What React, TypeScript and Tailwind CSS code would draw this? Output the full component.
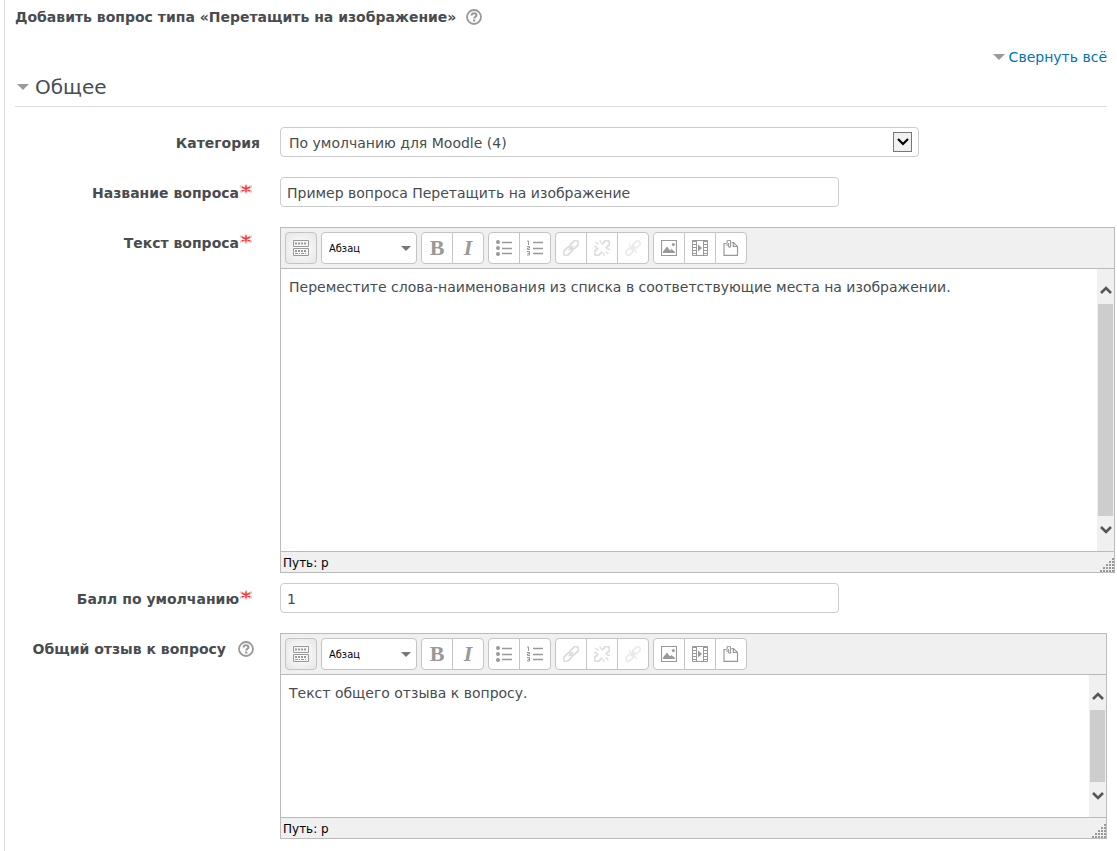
import { useId, useState } from 'react';
import type { ReactNode } from 'react';

function HelpButton({ label }: { label: string }) {
  return (
    <button type="button" aria-label={label} className="block size-4 shrink-0 cursor-pointer text-[#999999]">
      <svg viewBox="0 0 16 16" className="size-4" fill="none" stroke="currentColor">
        <circle cx="8" cy="8" r="7" strokeWidth="1.8" />
        <path d="M5.5 6.600C5.500 5 6.600 4.200 8 4.200s2.500.8 2.500 2.100c0 1.600-2.300 1.500-2.300 3.200" strokeWidth="2.100" />
        <path d="M7 11.500h2.300" strokeWidth="2" />
      </svg>
    </button>
  );
}

function Triangle() {
  return (
    <svg viewBox="0 0 12 6" className="h-1.5 w-3 shrink-0" fill="#999999">
      <path d="M0 0h12L6 6z" />
    </svg>
  );
}

function RequiredMark() {
  return (
    <svg viewBox="0 0 14 10" className="mb-2 h-2.5 w-3.5 shrink-0" fill="none" strokeLinecap="round">
      <path d="M7 1.500v7M2 2.500l10 5M12 2.500l-10 5" stroke="#ffb8b8" strokeWidth="2.400" />
      <path d="M7 2v5.500M3.500 3.300l7 3.400M10.500 3.300l-7 3.400" stroke="#ff3030" strokeWidth="1.300" />
    </svg>
  );
}

type RowProps = {
  label: string;
  htmlFor: string;
  required?: boolean;
  help?: boolean;
  children: ReactNode;
};

function Row({ label, htmlFor, required, help, children }: RowProps) {
  return (
    <div className="flex items-start gap-5">
      <div className="flex h-[30px] w-[245px] shrink-0 items-center justify-end pt-0.5">
        <label htmlFor={htmlFor} className="font-bold">
          {label}
        </label>
        {required && (
          <span className="mr-[7px]">
            <RequiredMark />
          </span>
        )}
        {help && (
          <span className="mr-1.5 ml-3">
            <HelpButton label={`Справка: ${label}`} />
          </span>
        )}
      </div>
      <div className="min-w-0 flex-1">{children}</div>
    </div>
  );
}

function Icon({ children, faded }: { children: ReactNode; faded?: boolean }) {
  return (
    <svg
      viewBox="0 0 16 16"
      className={faded ? 'size-4 text-[#dddddd]' : 'size-4 text-[#999999]'}
      fill="none"
      stroke="currentColor"
    >
      {children}
    </svg>
  );
}

const keyboardIcon = (
  <Icon>
    <path d="M.5.5h15v6H.5zM.5 8.500h15v7H.5z" />
    <path d="M2 3.500h12" strokeWidth="2" strokeDasharray="2 1" />
    <path d="M2 11h12" strokeWidth="2" strokeDasharray="2 1" />
    <path d="M2 13.500h12" strokeDasharray="3 1 1 1" />
  </Icon>
);

const bulletIcon = (
  <Icon>
    <g fill="currentColor" stroke="none">
      <circle cx="2" cy="2" r="2" />
      <circle cx="2" cy="8" r="2" />
      <circle cx="2" cy="14" r="2" />
    </g>
    <path d="M6 2.500h10M6 8.500h10M6 13.500h10" strokeWidth="1.400" />
  </Icon>
);

const numberIcon = (
  <Icon>
    <path d="M0 1h1.500v4M0 6.500h2.500v1.500H.500v1.500H3M0 11.500h2.500v3.500H0M.500 13.300h2" strokeWidth="1" />
    <path d="M6 2.500h10M6 8.500h10M6 13.500h10" strokeWidth="1.400" />
  </Icon>
);

const linkIcon = (
  <Icon faded>
    <g transform="rotate(-45 8 8)" strokeWidth="1.900">
      <rect x="-1.500" y="5.200" width="10" height="5.600" rx="2.800" />
      <rect x="7.500" y="5.200" width="10" height="5.600" rx="2.800" />
      <path d="M5 8h6" />
    </g>
  </Icon>
);

const unlinkIcon = (
  <Icon faded>
    <g transform="rotate(-45 8 8)" strokeWidth="1.900">
      <path d="M5.500 5.200H1.300a2.800 2.800 0 0 0 0 5.600h4.200M10.500 5.200h4.200a2.800 2.800 0 0 1 0 5.600h-4.200" />
    </g>
    <path d="M1.500 2l3 2.500M6 0l.7 3M0 6.500l3 .5M14.500 14l-3-2.500M10 16l-.7-3M16 9.500l-3-.5" strokeWidth="1.300" />
  </Icon>
);

const noLinkIcon = (
  <span className="opacity-60">
    <Icon faded>
      <g transform="rotate(-45 8 8)" strokeWidth="1.500">
        <rect x="-1" y="5.500" width="8" height="5" rx="2.500" />
        <rect x="9" y="5.500" width="8" height="5" rx="2.500" />
        <path d="M5 8h6" />
      </g>
      <path d="M4 4l8 9M8 3v10M3.500 8h9" strokeWidth="1.200" />
    </Icon>
  </span>
);

const imageIcon = (
  <Icon>
    <path d="M.5.500h15v15H.5z" strokeWidth="1.200" />
    <g fill="currentColor" stroke="none">
      <path d="M2 13V11.500L6 6.500l3 4 1.500-1.500L14 12v1z" />
      <circle cx="12.300" cy="4.500" r="1.500" />
    </g>
  </Icon>
);

const mediaIcon = (
  <Icon>
    <path d="M.5.500h15v15H.5zM4.500 0v16M11.500 0v16" />
    <path d="M2.500 1v14M13.500 1v14" strokeWidth="3" strokeDasharray="1 2" />
    <path d="M6 4.500l4 3.500-4 3.500z" fill="currentColor" stroke="none" />
  </Icon>
);

const pasteIcon = (
  <Icon>
    <path d="M3 3.500H1v11.800h13.500V6.500L10.500 2.500H8.500M10.300 2.800V6.500h4" strokeWidth="1.200" />
    <path d="M4 6V2a1.800 1.800 0 0 1 3.600 0V6.500a1.100 1.100 0 0 1-2 0V3" strokeWidth="1.100" />
  </Icon>
);

const boldIcon = <span className="font-['Liberation_Serif',serif] text-[22px] leading-none font-bold text-[#999999]">B</span>;
const italicIcon = <span className="font-['Liberation_Serif',serif] text-[22px] leading-none font-bold italic text-[#999999]">I</span>;

type Tool = { name: string; icon: ReactNode; disabled?: boolean };

const toolGroups: Tool[][] = [
  [
    { name: 'Полужирный', icon: boldIcon },
    { name: 'Курсив', icon: italicIcon },
  ],
  [
    { name: 'Маркированный список', icon: bulletIcon },
    { name: 'Нумерованный список', icon: numberIcon },
  ],
  [
    { name: 'Вставить ссылку', icon: linkIcon, disabled: true },
    { name: 'Удалить ссылку', icon: unlinkIcon, disabled: true },
    { name: 'Без автоссылки', icon: noLinkIcon, disabled: true },
  ],
  [
    { name: 'Изображение', icon: imageIcon },
    { name: 'Медиа', icon: mediaIcon },
    { name: 'Управление файлами', icon: pasteIcon },
  ],
];

function Toolbar() {
  return (
    <div className="flex gap-1 border-b border-[#bbbbbb] bg-[#f0f0f0] p-1">
      <button
        type="button"
        aria-label="Показать панели"
        className="flex size-8 items-center justify-center rounded border border-[#c4c4c4] bg-[radial-gradient(#ffffff,#e6e6e6)]"
      >
        {keyboardIcon}
      </button>
      <div className="relative">
        <select
          aria-label="Формат"
          className="block h-8 w-24 appearance-none rounded border border-[#c4c4c4] bg-white pt-px pr-5 pl-[7px] font-['DejaVu_Sans_Condensed','DejaVu_Sans',sans-serif] text-[11px] text-black"
        >
          <option>Абзац</option>
        </select>
        <svg viewBox="0 0 10 5" className="pointer-events-none absolute top-3.5 right-1.5 h-[5px] w-2.5" fill="#777777">
          <path d="M0 0h10L5 5z" />
        </svg>
      </div>
      {toolGroups.map((group) => (
        <div key={group[0].name} className="flex divide-x divide-[#c4c4c4] overflow-hidden rounded border border-[#c4c4c4] bg-white">
          {group.map((tool) => (
            <button
              key={tool.name}
              type="button"
              aria-label={tool.name}
              disabled={tool.disabled}
              className="box-content flex h-[30px] w-[30px] items-center justify-center"
            >
              {tool.icon}
            </button>
          ))}
        </div>
      ))}
    </div>
  );
}

function Chevron({ down }: { down?: boolean }) {
  return (
    <svg viewBox="0 0 12 8" className="h-2 w-3" fill="none" stroke="#555555" strokeWidth="2.600">
      <path d={down ? 'M1 1l5 5 5-5' : 'M1 7l5-5 5 5'} />
    </svg>
  );
}

function Scrollbar() {
  return (
    <div aria-hidden="true" className="flex w-[17px] shrink-0 flex-col items-center bg-[#f0f0f0]">
      <div className="flex h-[35px] items-center pt-1.5">
        <Chevron />
      </div>
      <div className="w-[15px] flex-1 bg-[#cdcdcd]" />
      <div className="flex h-[35px] items-center pb-2">
        <Chevron down />
      </div>
    </div>
  );
}

function ResizeGrip() {
  return (
    <svg viewBox="0 0 14 14" className="size-3.5" fill="#999999">
      {[0, 1, 2, 3, 4].flatMap((row) =>
        Array.from({ length: row + 1 }, (_, i) => (
          <rect key={`${row}-${i}`} x={12 - i * 3} y={row * 3} width="2" height="2" />
        )),
      )}
    </svg>
  );
}

function Editor({ id, initial, tall }: { id: string; initial: string; tall?: boolean }) {
  const [text, setText] = useState(initial);
  return (
    <div className={tall ? '-mr-2 border border-[#bbbbbb]' : 'border border-[#bbbbbb]'}>
      <Toolbar />
      <div className={tall ? 'flex h-[282px]' : 'flex h-[142px]'}>
        <textarea
          id={id}
          value={text}
          onChange={(e) => setText(e.target.value)}
          className="block min-w-0 flex-1 resize-none overflow-hidden bg-white px-2 py-2 leading-5 outline-none"
        />
        <Scrollbar />
      </div>
      <div className="flex h-[21px] items-end justify-between border-t border-[#bbbbbb] bg-[#f0f0f0] pl-0.5 text-xs text-black">
        <span className="leading-[18px]">Путь: p</span>
        <ResizeGrip />
      </div>
    </div>
  );
}

const inputClass =
  'block h-[30px] w-[559px] max-w-full rounded border border-[#cccccc] bg-white px-1.5 pt-0.5 outline-none';

export default function App() {
  const uid = useId();
  const [open, setOpen] = useState(true);
  return (
    <div className="min-h-screen bg-white pl-1 font-['DejaVu_Sans',sans-serif] text-sm text-[#484c50]">
      <main className="min-h-screen border-l border-[#dddddd] px-2.5 pb-3">
        <header className="flex h-9 items-center gap-2.5 pb-0.5">
          <h2 className="font-bold">Добавить вопрос типа «Перетащить на изображение»</h2>
          <HelpButton label="Справка по типу вопроса" />
        </header>
        <div className="mt-[11px] flex h-5 items-center justify-end gap-1">
          <Triangle />
          <a href="#general" className="text-[#0075b8]">
            Свернуть всё
          </a>
        </div>
        <section id="general">
          <h3 className="border-b border-[#dddddd]">
            <button
              type="button"
              aria-expanded={open}
              onClick={() => setOpen(!open)}
              className="flex h-[39px] w-full items-center gap-1.5 pl-0.5 text-xl"
            >
              <Triangle />
              Общее
            </button>
          </h3>
          {open && (
            <form className="mt-5 flex flex-col gap-5">
              <Row label="Категория" htmlFor={`${uid}-category`}>
                <div className="relative w-[639px] max-w-full">
                  <select
                    id={`${uid}-category`}
                    className="block h-[30px] w-full appearance-none rounded border border-[#cccccc] bg-white pt-0.5 pr-8 pl-2"
                  >
                    <option>По умолчанию для Moodle (4)</option>
                  </select>
                  <span className="pointer-events-none absolute top-[5px] right-[7px] flex h-5 w-[19px] items-center justify-center border border-[#777777] bg-[#f0f0f0]">
                    <svg viewBox="0 0 12 8" className="h-2 w-3" fill="none" stroke="#000000" strokeWidth="2.200">
                      <path d="M1 1l5 5 5-5" />
                    </svg>
                  </span>
                </div>
              </Row>
              <Row label="Название вопроса" htmlFor={`${uid}-name`} required>
                <input
                  id={`${uid}-name`}
                  type="text"
                  defaultValue="Пример вопроса Перетащить на изображение"
                  className={inputClass}
                />
              </Row>
              <div className="flex flex-col gap-2.5">
                <Row label="Текст вопроса" htmlFor={`${uid}-text`} required>
                  <Editor
                    id={`${uid}-text`}
                    tall
                    initial="Переместите слова-наименования из списка в соответствующие места на изображении."
                  />
                </Row>
                <Row label="Балл по умолчанию" htmlFor={`${uid}-mark`} required>
                  <input id={`${uid}-mark`} type="text" defaultValue="1" className={inputClass} />
                </Row>
              </div>
              <Row label="Общий отзыв к вопросу" htmlFor={`${uid}-feedback`} help>
                <Editor id={`${uid}-feedback`} initial="Текст общего отзыва к вопросу." />
              </Row>
            </form>
          )}
        </section>
      </main>
    </div>
  );
}
